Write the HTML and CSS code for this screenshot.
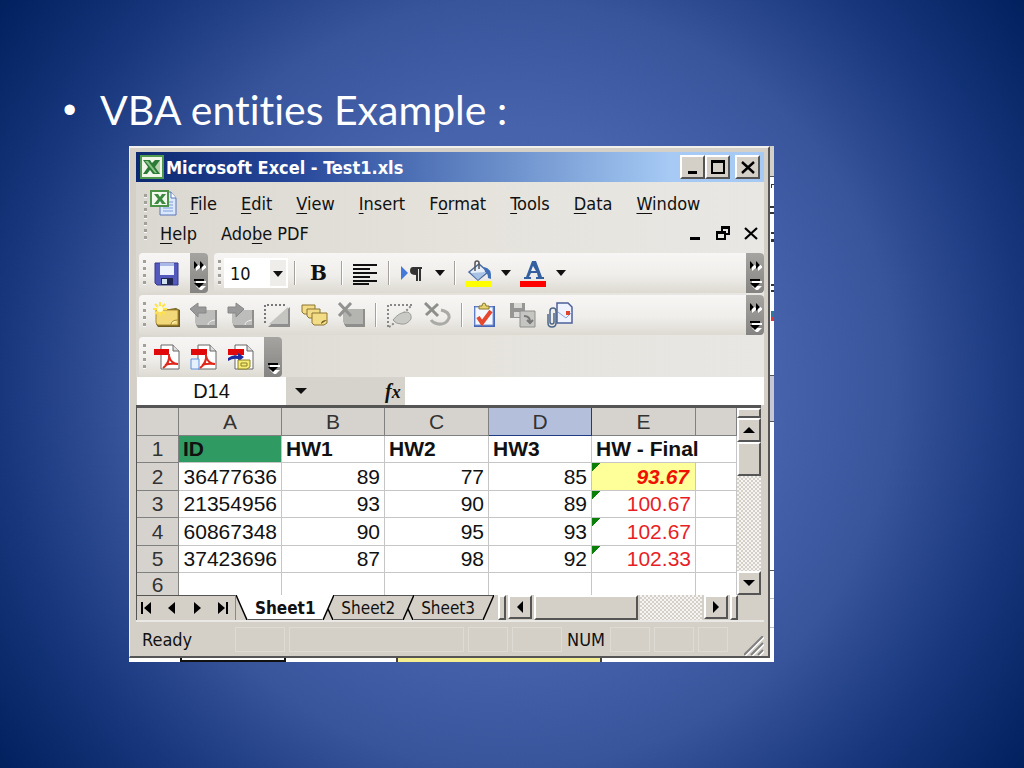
FILE: index.html
```html
<!DOCTYPE html>
<html lang="en">
<head>
  <meta charset="UTF-8" />
  <meta name="viewport" content="width=device-width, initial-scale=1.0"/>
  <title>VBA entities Example</title>
  <link rel="stylesheet" href="styles.css">
</head>
<body>
  <main class="slide">
    <ul class="bullets">
      <li>VBA entities Example :</li>
    </ul>

    <div class="capture">
      <div class="window">
        <!-- title bar -->
        <div class="title-bar">
          <svg class="app-icon" viewBox="0 0 24 24">
            <rect x="0" y="0" width="24" height="24" fill="#4f9a4c"/>
            <rect x="2" y="2" width="20" height="20" fill="#f0f6e8"/>
            <rect x="15" y="5" width="5" height="14" fill="#b9d3b0"/>
            <path d="M3 5h7l2 3 3-3h5l-5 7 5 7h-7l-3-4-3 4H3l5-7z" fill="#2c7a38"/>
            <path d="M5 6h3l9 12h-2z" fill="#8cc48a"/>
          </svg>
          <span class="title">Microsoft Excel - Test1.xls</span>
          <button class="box-btn" type="button" aria-label="Minimize"><svg viewBox="0 0 16 16"><path d="M3 12h9v3H3z"/></svg></button>
          <button class="box-btn" type="button" aria-label="Maximize"><svg viewBox="0 0 16 16"><path d="M1 1h14v14H1zM3 4v9h10V4z" fill-rule="evenodd"/></svg></button>
          <button class="box-btn close" type="button" aria-label="Close"><svg viewBox="0 0 16 16"><path d="M2 3l12 11M14 3L2 14" stroke="#000" stroke-width="2.4"/></svg></button>
        </div>

        <!-- menus -->
        <div class="menu-area">
          <span class="grip"></span>
          <div class="menu-rows">
            <div class="menu-row">
              <svg class="doc-icon" viewBox="0 0 27 27">
                <path d="M10 2h11l5 6v17H10z" fill="#dbe8fb" stroke="#5874b8"/>
                <path d="M21 2v6h5" fill="#fff" stroke="#5874b8"/>
                <path d="M13 18h10M13 21h10M18 12h5M18 15h5" stroke="#7f9ddb"/>
                <rect x="1" y="1" width="17" height="15" fill="#f2f8ee" stroke="#4c9247" stroke-width="2"/>
                <path d="M4 4h4l2 3 2-3h4l-4 5 4 5h-4l-2-3-2 3H4l4-5z" fill="#3b8a40"/>
              </svg>
              <button type="button"><u>F</u>ile</button>
              <button type="button"><u>E</u>dit</button>
              <button type="button"><u>V</u>iew</button>
              <button type="button"><u>I</u>nsert</button>
              <button type="button">F<u>o</u>rmat</button>
              <button type="button"><u>T</u>ools</button>
              <button type="button"><u>D</u>ata</button>
              <button type="button"><u>W</u>indow</button>
            </div>
            <div class="menu-row second">
              <button type="button"><u>H</u>elp</button>
              <button type="button">Ado<u>b</u>e PDF</button>
              <span class="doc-controls">
                <button type="button" aria-label="Minimize workbook"><svg viewBox="0 0 14 16"><path d="M2 12h10v3H2z"/></svg></button>
                <button type="button" aria-label="Restore workbook"><svg viewBox="0 0 14 16"><path d="M5 1h9v9h-4v5H0V6h5zm2 3v2h3v2h2V4zM2 9v4h6V9z" fill-rule="evenodd"/></svg></button>
                <button type="button" aria-label="Close workbook"><svg viewBox="0 0 14 16"><path d="M1 3l12 11M13 3L1 14" stroke="#000" stroke-width="2.2"/></svg></button>
              </span>
            </div>
          </div>
        </div>

        <!-- toolbars -->
        <div class="toolbars">
          <div class="bar-line">
            <div class="bar">
              <span class="grip"></span>
              <button class="tool" type="button" aria-label="Save">
                <svg viewBox="0 0 27 27">
                  <path d="M2 3h23v22H4l-2-2z" fill="#5459bd" stroke="#34388f"/>
                  <rect x="7" y="3" width="14" height="12" fill="#eef2fd"/>
                  <path d="M7 3h14v3H7z" fill="#a9b8e6"/>
                  <rect x="8" y="18" width="12" height="7" fill="#20264f"/>
                  <rect x="9" y="19" width="5" height="5" fill="#cfe0ee"/>
                </svg>
              </button>
              <button class="more" type="button" aria-label="More standard buttons"><svg viewBox="0 0 14 32"><path d="M4 6l5 4-5 4zM10 6l5 4-5 4zM4 24h10v2H4zM4 29h10l-5 5z" fill="#fff"/><path d="M2 4l4 4-4 4zM8 4l4 4-4 4zM2 22h10v2H2zM2 26h10l-5 5z"/></svg></button>
            </div>
            <div class="bar wide format">
              <span class="grip"></span>
              <span class="size-box">
                <select class="font-size" aria-label="Font size"><option>10</option></select>
                <span class="caret"></span>
              </span>
              <span class="sep"></span>
              <button class="tool bold" type="button" aria-label="Bold">B</button>
              <span class="sep"></span>
              <button class="tool" type="button" aria-label="Align left">
                <svg viewBox="0 0 27 27"><path d="M1 5h24M1 9h17M1 13h24M1 17h17M1 21h24M1 24h16" stroke="#111" stroke-width="2"/></svg>
              </button>
              <span class="sep"></span>
              <button class="tool" type="button" aria-label="Left to right">
                <svg viewBox="0 0 27 27"><path d="M2 6l7 7-7 7z" fill="#4379d8"/><path d="M14 7h9v2h-1v12h-2V9h-1v12h-2v-6q-6 0-6-4t3-4z" fill="#333"/></svg>
              </button>
              <button class="caret" type="button" aria-label="Direction options"></button>
              <span class="sep"></span>
              <button class="tool" type="button" aria-label="Fill color">
                <svg viewBox="0 0 27 27">
                  <path d="M4 12l10-8 9 8-10 8z" fill="#e8f0fa" stroke="#4a6a9e" stroke-width="1.5"/>
                  <path d="M6 13l15-1-8 8z" fill="#a8c2e6"/>
                  <path d="M10 11V3q0-2 2-2t2 2v6" fill="none" stroke="#555" stroke-width="1.5"/>
                  <path d="M19 7q8 1 7 12l-3-1q0-5-3-6z" fill="#3e6fb8"/>
                  <path d="M0 21h27v6H0z" fill="#ff0"/>
                </svg>
              </button>
              <button class="caret" type="button" aria-label="Fill color options"></button>
              <button class="tool" type="button" aria-label="Font color">
                <svg viewBox="0 0 27 27">
                  <path d="M12 1h4l6 16h2v2h-8v-2h2l-1-4h-6l-2 4h2v2H4v-2h2zm1 5l-2 5h5z" fill="#34609f" fill-rule="evenodd"/>
                  <path d="M0 21h26v6H0z" fill="#f00"/>
                </svg>
              </button>
              <button class="caret" type="button" aria-label="Font color options"></button>
              <button class="more" type="button" aria-label="More formatting buttons"><svg viewBox="0 0 14 32"><path d="M4 6l5 4-5 4zM10 6l5 4-5 4zM4 24h10v2H4zM4 29h10l-5 5z" fill="#fff"/><path d="M2 4l4 4-4 4zM8 4l4 4-4 4zM2 22h10v2H2zM2 26h10l-5 5z"/></svg></button>
            </div>
          </div>

          <div class="bar-line">
            <div class="bar wide">
              <span class="grip"></span>
              <button class="tool" type="button" aria-label="New comment">
                <svg viewBox="0 0 27 27">
                  <path d="M3 9l20-3 4 2v17H5l-2-3z" fill="#6e5c20"/>
                  <path d="M3 8h22v15H5l-2-2z" fill="#f2d878" stroke="#a98a34"/>
                  <path d="M18 23q0-5 7-5" fill="#fff0b0" stroke="#a98a34"/>
                  <path d="M7 0v14M0 7h14M2 2l10 10M12 2L2 12" stroke="#ffe34a" stroke-width="2"/>
                  <circle cx="7" cy="7" r="3" fill="#fffbd0"/>
                </svg>
              </button>
              <button class="tool" type="button" aria-label="Previous comment">
                <svg viewBox="0 0 27 27"><path d="M6 8h21v18H8l-2-3z" fill="#8e8e8c"/><path d="M5 8h20v15H7l-2-2z" fill="#bdbdbb"/><path d="M18 23q0-4 7-5" fill="none" stroke="#eee"/><path d="M0 7l8-6v4h8v6H8v4z" fill="#999" stroke="#888"/></svg>
              </button>
              <button class="tool" type="button" aria-label="Next comment">
                <svg viewBox="0 0 27 27"><path d="M6 8h21v18H8l-2-3z" fill="#8e8e8c"/><path d="M5 8h20v15H7l-2-2z" fill="#bdbdbb"/><path d="M18 23q0-4 7-5" fill="none" stroke="#eee"/><path d="M17 7L9 1v4H1v6h8v4z" fill="#999" stroke="#888"/></svg>
              </button>
              <button class="tool" type="button" aria-label="Show comment">
                <svg viewBox="0 0 27 27"><path d="M26 5v20H4z" fill="#8e8e8c"/><path d="M24 5v17H5z" fill="#c4c4c1"/><path d="M1 21V3h22" fill="none" stroke="#777" stroke-width="2" stroke-dasharray="2 2"/><path d="M2 23L24 4" stroke="#eee"/></svg>
              </button>
              <button class="tool" type="button" aria-label="Show all comments">
                <svg viewBox="0 0 27 27"><g stroke="#8b7430" fill="#f3dc86"><path d="M1 3h13v9H3l-2-2z"/><path d="M6 7h13v9H8l-2-2z"/><path d="M11 11h15v10l-3 2H13l-2-2z"/></g><path d="M20 22q0-4 6-4" fill="#6e5c20"/></svg>
              </button>
              <button class="tool" type="button" aria-label="Delete comment">
                <svg viewBox="0 0 27 27"><path d="M6 7h21v18H8l-2-3z" fill="#8e8e8c"/><path d="M5 7h20v15H7l-2-2z" fill="#b4b4b1"/><path d="M1 1l12 13M13 1L1 14" stroke="#929290" stroke-width="3"/></svg>
              </button>
              <span class="sep"></span>
              <button class="tool" type="button" aria-label="Show ink">
                <svg viewBox="0 0 27 27"><path d="M1 25V3h24L4 24z" fill="none" stroke="#888" stroke-width="2" stroke-dasharray="2 2"/><path d="M6 18q6-8 14-8 5 1 4 7-4 6-10 5-5 0-8-4z" fill="#c9c9c6" stroke="#9c9c99"/></svg>
              </button>
              <button class="tool" type="button" aria-label="Delete ink">
                <svg viewBox="0 0 27 27"><path d="M1 1l13 13M14 2L2 13" stroke="#8e8e8b" stroke-width="3"/><path d="M17 8q9 2 8 8-3 7-11 6-5-1-7-4" fill="none" stroke="#aaaaa7" stroke-width="3"/></svg>
              </button>
              <span class="sep"></span>
              <button class="tool" type="button" aria-label="Create task">
                <svg viewBox="0 0 27 27"><path d="M1 4h21v21H1z" fill="#4466b5"/><path d="M2 5h18v18H2z" fill="#f4f7ff" stroke="#7e98d6"/><path d="M6 7V4h3q0-3 2-3t2 3h3v3z" fill="#e7d36c" stroke="#887630"/><path d="M5 15l4 6L18 9" fill="none" stroke="#e5482f" stroke-width="4"/></svg>
              </button>
              <button class="tool" type="button" aria-label="Update file">
                <svg viewBox="0 0 27 27"><path d="M0 1h15v15H0z" fill="#969694"/><path d="M4 1h8v5H4zM4 10h7v5H4z" fill="#d9d9d6"/><path d="M10 9h15v16H10z" fill="#c5c5c2" stroke="#8e8e8b"/><path d="M14 14q6 0 6 6m-3-2l3 3 3-3" fill="none" stroke="#777" stroke-width="2"/></svg>
              </button>
              <button class="tool" type="button" aria-label="Send to mail recipient">
                <svg viewBox="0 0 27 27"><path d="M10 1h11l4 4v16H10z" fill="#eef3ff" stroke="#4c6199" stroke-width="1.5"/><path d="M11 10l8 6 6-6" fill="none" stroke="#8ba3da"/><rect x="19" y="9" width="4" height="4" fill="#e2432b"/><path d="M1 12v9q0 4 4 4t4-4V9q0-3-3-3T3 9v11q0 2 2 2t2-2v-9" fill="none" stroke="#4d6689" stroke-width="1.5"/></svg>
              </button>
              <button class="more" type="button" aria-label="More reviewing buttons"><svg viewBox="0 0 14 32"><path d="M4 6l5 4-5 4zM10 6l5 4-5 4zM4 24h10v2H4zM4 29h10l-5 5z" fill="#fff"/><path d="M2 4l4 4-4 4zM8 4l4 4-4 4zM2 22h10v2H2zM2 26h10l-5 5z"/></svg></button>
            </div>
          </div>

          <div class="bar-line">
            <div class="bar">
              <span class="grip"></span>
              <button class="tool" type="button" aria-label="Convert to PDF">
                <svg viewBox="0 0 27 27"><path d="M8 1h12l6 6v18H8z" fill="#fff" stroke="#666"/><path d="M20 1v6h6" fill="#ddd" stroke="#666"/><path d="M1 5h15v6H1z" fill="#e00808"/><path d="M16 10q1 9-6 14M16 12q2 8 9 8-8-1-13 1" fill="none" stroke="#e0281c" stroke-width="2"/></svg>
              </button>
              <button class="tool" type="button" aria-label="Convert and email">
                <svg viewBox="0 0 27 27"><path d="M8 1h12l6 6v18H8z" fill="#fff" stroke="#666"/><path d="M20 1v6h6" fill="#ddd" stroke="#666"/><path d="M1 15h8v10H1z" fill="#e6f0ff" stroke="#5c92dc"/><path d="M1 5h16v6H1z" fill="#e00808"/><path d="M16 10q1 9-6 14M16 12q2 8 9 8-8-1-13 1" fill="none" stroke="#e0281c" stroke-width="2"/></svg>
              </button>
              <button class="tool" type="button" aria-label="Convert and send for review">
                <svg viewBox="0 0 27 27"><path d="M8 1h12l6 6v18H8z" fill="#fff" stroke="#666"/><path d="M20 1v6h6" fill="#ddd" stroke="#666"/><path d="M1 5h16v6H1z" fill="#e00808"/><path d="M1 14q6-4 10-2V9l6 4-6 5v-3q-5-1-10 2z" fill="#1d2da0"/><path d="M11 16h12v7l-3 2h-9z" fill="#f5ec73" stroke="#8c812b"/><path d="M14 19h6v3h-6z" fill="none" stroke="#8c812b"/></svg>
              </button>
              <button class="more" type="button" aria-label="More PDF buttons"><svg viewBox="0 0 14 32"><path d="M4 24h10v2H4zM4 29h10l-5 5z" fill="#fff"/><path d="M2 22h10v2H2zM2 26h10l-5 5z"/></svg></button>
            </div>
          </div>
        </div>

        <!-- name box and formula bar -->
        <div class="formula-bar">
          <input class="name-box" type="text" value="D14" aria-label="Name box">
          <button class="caret" type="button" aria-label="Names"></button>
          <button class="fx" type="button" aria-label="Insert function">f<span>x</span></button>
          <input class="formula" type="text" aria-label="Formula">
        </div>

        <!-- sheet -->
        <div class="sheet">
          <div class="cells">
            <table>
              <colgroup><col class="c-num"><col class="c"><col class="c"><col class="c odd"><col class="c"><col class="c odd"><col></colgroup>
              <thead>
                <tr><th></th><th>A</th><th>B</th><th>C</th><th class="current">D</th><th>E</th><th></th></tr>
              </thead>
              <tbody>
                <tr class="labels"><th>1</th><td class="id">ID</td><td>HW1</td><td>HW2</td><td>HW3</td><td colspan="2">HW - Final</td></tr>
                <tr><th>2</th><td>36477636</td><td>89</td><td>77</td><td>85</td><td class="final top">93.67</td><td></td></tr>
                <tr><th>3</th><td>21354956</td><td>93</td><td>90</td><td>89</td><td class="final">100.67</td><td></td></tr>
                <tr><th>4</th><td>60867348</td><td>90</td><td>95</td><td>93</td><td class="final">102.67</td><td></td></tr>
                <tr><th>5</th><td>37423696</td><td>87</td><td>98</td><td>92</td><td class="final">102.33</td><td></td></tr>
                <tr class="last"><th>6</th><td></td><td></td><td></td><td></td><td></td><td></td></tr>
              </tbody>
            </table>
          </div>
          <div class="v-scroll">
            <span class="v-split"></span>
            <button class="scroll-btn" type="button" aria-label="Scroll up"><svg viewBox="0 0 12 12"><path d="M0 9l6-6 6 6z"/></svg></button>
            <span class="v-thumb"></span>
            <span class="track"></span>
            <button class="scroll-btn" type="button" aria-label="Scroll down"><svg viewBox="0 0 12 12"><path d="M0 3l6 6 6-6z"/></svg></button>
          </div>
        </div>

        <div class="tab-line">
          <div class="tab-nav">
            <button type="button" aria-label="First sheet"><svg viewBox="0 0 12 12"><path d="M1 0h2v12H1zM11 0v12L4 6z"/></svg></button>
            <button type="button" aria-label="Previous sheet"><svg viewBox="0 0 12 12"><path d="M9 0v12L2 6z"/></svg></button>
            <button type="button" aria-label="Next sheet"><svg viewBox="0 0 12 12"><path d="M3 0v12l7-6z"/></svg></button>
            <button type="button" aria-label="Last sheet"><svg viewBox="0 0 12 12"><path d="M1 0v12l7-6zM9 0h2v12H9z"/></svg></button>
          </div>
          <div class="tabs">
            <svg class="slant" viewBox="0 0 12 25"><path d="M0 0h12v25z" fill="#fff"/><path d="M0 0l11 25" stroke="#000" stroke-width="1.5"/></svg>
            <button class="tab active" type="button">Sheet1</button>
            <svg class="slant" viewBox="0 0 12 25"><path d="M0 0h12L1 25H0z" fill="#fff"/><path d="M12 0L1 25M6 14l5 11" stroke="#000" stroke-width="1.5"/></svg>
            <button class="tab" type="button">Sheet2</button>
            <svg class="slant" viewBox="0 0 12 25"><path d="M0 0h12" stroke="#555" stroke-width="2"/><path d="M12 0L1 25M6 14l5 11" stroke="#000" stroke-width="1.5"/></svg>
            <button class="tab" type="button">Sheet3</button>
            <svg class="slant" viewBox="0 0 12 25"><path d="M0 0h12" stroke="#555" stroke-width="2"/><path d="M12 0L1 25" stroke="#000" stroke-width="1.5"/></svg>
          </div>
          <div class="h-scroll">
            <span class="h-split"></span>
            <button class="scroll-btn" type="button" aria-label="Scroll left"><svg viewBox="0 0 12 12"><path d="M9 0v12L3 6z"/></svg></button>
            <span class="h-thumb"></span>
            <span class="track"></span>
            <button class="scroll-btn" type="button" aria-label="Scroll right"><svg viewBox="0 0 12 12"><path d="M3 0v12l6-6z"/></svg></button>
            <span class="h-split"></span>
          </div>
        </div>

        <!-- status bar -->
        <div class="status-bar">
          <span class="ready">Ready</span>
          <span class="pane p50"></span>
          <span class="pane grow"></span>
          <span class="pane"></span>
          <span class="pane p50"></span>
          <span class="pane num">NUM</span>
          <span class="pane"></span>
          <span class="pane"></span>
          <span class="pane p30"></span>
          <svg class="resize" viewBox="0 0 20 20"><path d="M1 20L20 1M8 20L20 8M15 20l5-5" stroke="#fff" stroke-width="2"/><path d="M0 19L19 0M7 19L19 7M14 19l5-5" stroke="#808080" stroke-width="2"/></svg>
        </div>
      </div>

      <!-- bits of the sheet that lies behind the window -->
      <svg class="behind-right" viewBox="0 0 4 512" preserveAspectRatio="none">
        <path d="M0 0h4v30H0z" fill="#d4d0c8"/>
        <path d="M0 30h4v1H0zM0 229h4v1H0zM0 275h4v1H0zM0 424h4v1H0z" fill="#555"/>
        <path d="M0 230h4v45H0z" fill="#c9c6d4"/>
        <path d="M0 452h4v1H0zM0 481h4v1H0z" fill="#c0c0c0"/>
        <path d="M1 38h3v1H2v3H1zM0 60h4v2H0zM0 66h4v2H0zM1 86h3v2H1zM1 93h3v3H1zM1 138h3v2H1zM1 144h3v2H1z" fill="#333"/>
        <path d="M1 165h3v6H1z" fill="#2b7a9c"/>
        <path d="M1 171h3v4H1z" fill="#d33"/>
      </svg>
      <div class="behind-bottom">
        <span class="black-cell"></span>
        <span class="yellow-cell"></span>
      </div>
    </div>
  </main>
</body>
</html>
```
FILE: styles.css
```css
* {
  box-sizing: border-box;
}

body {
  margin: 0;
  font-family: "DejaVu Sans Condensed", "DejaVu Sans", sans-serif;
  font-size: 18px;
  color: #111;
}

button,
input,
select {
  font: inherit;
  color: inherit;
  margin: 0;
  padding: 0;
  border: none;
  border-radius: 0;
  background: none;
}

svg {
  display: block;
  flex: none;
}

.slide {
  min-height: 100vh;
  padding: 80px 250px 40px 129px;
  background: radial-gradient(circle at 50% 50%, #4c69b2 0%, #4763ac 40%, #38549b 60%, #17367c 80%, #00205e 100%);
}

.bullets {
  display: flex;
  margin: 0 0 6px -66px;
  padding: 0;
  list-style: none;
  color: white;
  font-family: Lato, sans-serif;
  font-size: 41px;
  font-variant-ligatures: none;
  line-height: 60px;
  white-space: nowrap;
}

.bullets li {
  display: flex;
}

.bullets li::before {
  content: "•";
  width: 37px;
  font-family: "Liberation Sans", sans-serif;
  font-size: 38px;
}

.capture {
  display: grid;
  grid-template-columns: 1fr 4px;
  background: white;
}

.window {
  padding: 4px 4px 0 6px;
  background: #d4d0c8;
  border: 2px solid #f2f0ec;
  border-left-width: 1px;
  border-right-color: #555;
  border-bottom-color: #555;
  min-width: 0;
}

/* title bar */

.title-bar {
  display: flex;
  align-items: center;
  height: 30px;
  padding: 0 4px;
  color: white;
  background: linear-gradient(to right, #0c2870, #27479a 25%, #6e92cc 60%, #a6caf4 85%);
}

.app-icon {
  width: 24px;
  height: 24px;
}

.title {
  flex: 1;
  margin-left: 2px;
  font-size: 18px;
  font-weight: bold;
  white-space: nowrap;
}

.box-btn,
.scroll-btn,
.v-thumb,
.h-thumb,
.v-split,
.h-split {
  background: #d4d0c8;
  border: 2px solid;
  border-color: #fff #555 #555 #fff;
}

.box-btn {
  display: flex;
  align-items: center;
  justify-content: center;
  width: 25px;
  height: 24px;
}

.box-btn.close {
  margin-left: 5px;
}

.box-btn svg {
  width: 16px;
  height: 16px;
}

/* menus */

.menu-area {
  display: flex;
  padding: 6px 6px 3px 8px;
  background: linear-gradient(to right, #dbd8d1, #e5e3dc 55%, #e8e7e4);
}

.grip {
  width: 3px;
  align-self: stretch;
  margin: 6px 0;
  background: repeating-linear-gradient(to bottom, #a3a09a 0 3px, #f8f8f6 3px 4px, transparent 4px 7px);
}

.menu-rows {
  flex: 1;
  margin-left: 3px;
}

.menu-row {
  display: flex;
  align-items: center;
  gap: 24px;
  height: 30px;
  white-space: nowrap;
}

.menu-row.second {
  padding-left: 10px;
}

.menu-row u {
  text-underline-offset: 3px;
}

.doc-icon {
  width: 27px;
  height: 27px;
  margin-right: -11px;
}

.doc-controls {
  display: flex;
  gap: 14px;
  margin-left: auto;
}

.doc-controls svg {
  width: 14px;
  height: 16px;
}

/* toolbars */

.toolbars {
  display: flex;
  flex-direction: column;
  gap: 2px;
  padding: 2px 0 0 3px;
  background: linear-gradient(to right, #dbd8d1, #e5e3dc 55%, #e8e7e4);
}

.bar-line {
  display: flex;
  gap: 6px;
}

.bar {
  display: flex;
  align-items: center;
  gap: 10px;
  height: 40px;
  padding-left: 4px;
  border-radius: 4px;
  background: linear-gradient(to bottom, #f8f6f4, #f0eeeb 55%, #dddad2);
}

.bar.wide {
  flex: 1;
}

.bar.format {
  gap: 9px;
}

.bar .grip {
  margin: 7px -3px 7px 0;
}

.tool {
  width: 27px;
  height: 27px;
}

.tool svg {
  width: 27px;
  height: 27px;
}

.tool.bold {
  font-family: "DejaVu Serif", serif;
  font-weight: bold;
  font-size: 20px;
  line-height: 27px;
}

.sep {
  width: 2px;
  height: 24px;
  border-left: 1px solid #a5a29c;
  border-right: 1px solid white;
}

.caret {
  width: 10px;
  height: 6px;
  background: #111;
  clip-path: polygon(0 0, 100% 0, 50% 100%);
}

.size-box {
  position: relative;
  margin: 0 -3px;
}

.font-size {
  display: block;
  width: 64px;
  height: 30px;
  padding-left: 6px;
  appearance: none;
  background: white linear-gradient(#efedea, #efedea) no-repeat right 2px center / 16px 26px;
  font-size: 18px;
}

/* the drop-down arrow of the size box */
.size-box .caret {
  position: absolute;
  top: 13px;
  right: 5px;
  pointer-events: none;
}

.more {
  width: 18px;
  align-self: stretch;
  margin-left: auto;
  padding-left: 2px;
  border-radius: 0 4px 4px 0;
  background: linear-gradient(to bottom, #a5a4a1, #858482);
}

.more svg {
  width: 14px;
  height: 34px;
}

/* formula bar */

.formula-bar {
  display: flex;
  align-items: center;
  height: 28px;
  padding-left: 1px;
  background: #d6d3cd;
  font-family: "Liberation Sans", sans-serif;
  font-size: 20px;
}

.name-box {
  width: 149px;
  height: 28px;
  background: white;
  text-align: center;
}

.formula-bar .caret {
  width: 12px;
  margin-left: 9px;
}

.fx {
  margin-left: 78px;
  font-family: "Liberation Serif", serif;
  font-style: italic;
  font-weight: bold;
}

.fx span {
  font-size: 18px;
}

.formula {
  flex: 1;
  min-width: 0;
  height: 28px;
  margin-left: 4px;
  background: white;
}

/* sheet */

.sheet {
  display: flex;
  border-top: 3px solid #555;
  border-left: 1px solid #555;
  margin-right: 3px;
}

.cells {
  flex: 1;
  min-width: 0;
  background: white;
}

table {
  width: 100%;
  table-layout: fixed;
  border-collapse: separate;
  border-spacing: 0;
  font-family: "Liberation Sans", sans-serif;
  font-size: 21px;
  line-height: 24px;
}

.c-num {
  width: 42px;
}

.c {
  width: 103px;
}

.c.odd {
  width: 104px;
}

tr {
  height: 27px;
}

thead tr,
tbody tr:nth-child(even) {
  height: 28px;
}

tbody tr.last {
  height: 22px;
  line-height: 21px;
}

th,
td {
  padding: 0 4px;
  white-space: nowrap;
}

th {
  font-weight: normal;
  color: #333;
  background: #d6d3ce;
  border-right: 1px solid #808080;
  border-bottom: 1px solid #808080;
}

th.current {
  background: #b4bfdc;
  border-color: #1f3a85;
}

td {
  text-align: right;
  border-right: 1px solid #c6c6c6;
  border-bottom: 1px solid #c6c6c6;
}

.last th,
.last td {
  border-bottom: none;
}

.labels td {
  text-align: left;
  font-weight: bold;
}

.labels .id {
  background: #2f9a62;
}

.final {
  color: #e81e26;
  background: linear-gradient(135deg, #0a800a 6px, transparent 6px) no-repeat;
}

.final.top {
  padding-right: 6px;
  color: #f01000;
  font-weight: bold;
  font-style: italic;
  background-color: #ffff99;
}

.v-scroll {
  display: flex;
  flex-direction: column;
  width: 24px;
}

.v-split {
  height: 10px;
}

.track {
  flex: 1;
  background: repeating-conic-gradient(#d4d0c8 0 25%, #f6f5f3 0 50%) 0 0 / 4px 4px;
}

.scroll-btn {
  display: flex;
  align-items: center;
  justify-content: center;
  width: 24px;
  height: 24px;
}

.scroll-btn svg {
  width: 12px;
  height: 12px;
}

.v-thumb {
  height: 34px;
}

.tab-line {
  display: flex;
  height: 25px;
  margin-right: 26px;
  border-left: 1px solid #555;
  font-size: 17px;
}

.tab-nav {
  display: flex;
  align-items: center;
  justify-content: space-between;
  width: 99px;
  padding: 0 6px 0 3px;
  border-top: 1px solid #555;
  border-right: 1px solid #888;
}

.tab-nav svg {
  width: 12px;
  height: 12px;
}

.tabs {
  display: flex;
  width: 258px;
}

.slant {
  width: 12px;
  height: 25px;
}

.tab {
  flex: 1 1 auto;
  border-top: 1px solid #555;
  border-bottom: 1px solid #555;
}

.tab.active {
  background: white;
  border-top-color: white;
  font-weight: bold;
}

.h-scroll {
  flex: 1;
  display: flex;
  gap: 2px;
  margin-left: 4px;
}

.h-split {
  width: 8px;
}

.h-thumb {
  width: 104px;
}

/* status bar */

.status-bar {
  display: flex;
  align-items: center;
  gap: 4px;
  height: 36px;
  padding-left: 6px;
  border-top: 2px solid #ebe9e5;
}

.ready {
  width: 89px;
}

.pane {
  width: 40px;
  height: 25px;
  border: 1px solid #dedbd5;
}

.pane.p50 {
  width: 50px;
}

.pane.p30 {
  width: 30px;
}

.pane.grow {
  flex: 1;
}

.pane.num {
  border: none;
  line-height: 25px;
  text-align: center;
}

.resize {
  width: 20px;
  height: 20px;
  margin-left: 12px;
  align-self: flex-end;
}

/* edges of the sheet behind */

.behind-right {
  width: 4px;
  height: 100%;
}

.behind-bottom {
  grid-column: 1 / -1;
  display: flex;
  height: 4px;
  padding-left: 51px;
}

.black-cell {
  width: 106px;
  border: 2px solid #111;
  border-top: none;
}

.yellow-cell {
  width: 206px;
  margin-left: 110px;
  background: #f5ee90;
  border-left: 2px solid #444;
  border-right: 2px solid #444;
}
```
